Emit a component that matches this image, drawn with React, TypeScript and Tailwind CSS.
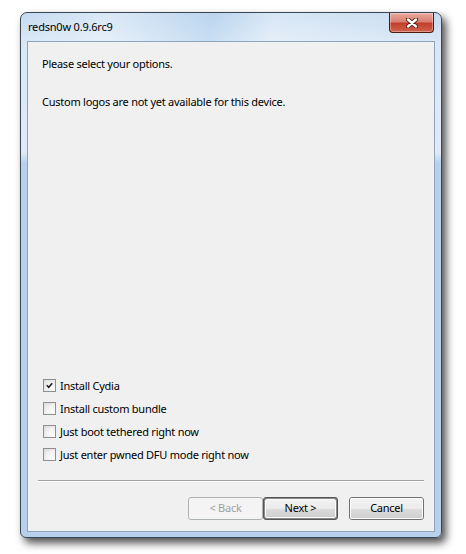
import { ReactNode } from "react";

function CheckBox({ checked, label }: { checked?: boolean; label: string }) {
  return (
    <div className="flex items-center h-[23px]">
      <div className="w-[13px] h-[13px] border border-[#8e8f8f] bg-[linear-gradient(135deg,#dcdcdc,#fdfdfd)] p-[2px]">
        <div className="w-full h-full bg-[linear-gradient(135deg,#e9e9e9,#ffffff)] flex items-center justify-center">
          {checked && (
            <svg width="9" height="9" viewBox="0 0 9 9">
              <path d="M1 4.2 L3.5 6.8 L8 1.5" stroke="#1a1a1a" strokeWidth="1.9" fill="none" />
            </svg>
          )}
        </div>
      </div>
      <span className="ml-[4px] text-[11px] tracking-[-0.25px] text-black leading-none">{label}</span>
    </div>
  );
}

function Btn({ children, disabled, def }: { children: ReactNode; disabled?: boolean; def?: boolean }) {
  if (disabled) {
    return (
      <div className="w-[75px] h-[23px] rounded-[3px] border border-[#adb2b5] bg-[#f4f4f4] flex items-center justify-center text-[11px] tracking-[-0.25px] text-[#a0a0a0]">
        {children}
      </div>
    );
  }
  return (
    <div
      className={
        def
          ? "w-[75px] h-[23px] rounded-[3px] border border-[#555555] p-[1px] bg-[#8a8a8a]"
          : "w-[75px] h-[23px] rounded-[3px] border border-[#707070] bg-[#f4f4f4]"
      }
    >
      <div className="w-full h-full rounded-[2px] border border-[#fcfcfc] bg-[linear-gradient(to_bottom,#f2f2f2_0%,#ebebeb_50%,#dddddd_50%,#cfcfcf_100%)] flex items-center justify-center text-[11px] tracking-[-0.25px] text-black">
        {children}
      </div>
    </div>
  );
}

export default function App() {
  return (
    <div className="w-[466px] h-[554px] bg-white pl-[20px] pt-[12px] font-['Noto_Sans',sans-serif]">
      <div className="w-[422px] h-[526px] rounded-t-[7px] rounded-b-[6px] border border-[#3a4755] shadow-[4px_5px_9px_rgba(0,0,0,0.7)] bg-[linear-gradient(to_bottom,#c6dbf1_0px,#d9e7f5_28px,#dfeaf6_140px,#b7d0ec_150px,#b7d0ec_100%)] flex flex-col px-[6px] pb-[5px]">
        <div className="h-[28px] flex items-start justify-between bg-[linear-gradient(100deg,rgba(255,255,255,0)_0%,rgba(255,255,255,0.35)_20%,rgba(160,200,235,0.3)_45%,rgba(255,255,255,0.3)_60%,rgba(255,255,255,0)_100%)]">
          <span className="mt-[6px] ml-[1px] text-[11px] tracking-[-0.2px] text-black">redsn0w 0.9.6rc9</span>
          <div className="w-[45px] h-[20px] mr-[1px] rounded-b-[4px] border border-[#4d1a12] border-t-0 bg-[linear-gradient(to_bottom,#e9a99c_0%,#d98171_45%,#c2402b_55%,#d0624c_100%)] flex items-center justify-center shadow-[inset_0_0_0_1px_rgba(255,255,255,0.35)]">
            <svg width="12" height="10" viewBox="0 0 12 10">
              <path d="M2 1.5 L10 8.5 M10 1.5 L2 8.5" stroke="#4a1a12" strokeWidth="4.2" strokeLinecap="round" />
              <path d="M2 1.5 L10 8.5 M10 1.5 L2 8.5" stroke="#ffffff" strokeWidth="2.4" strokeLinecap="round" />
            </svg>
          </div>
        </div>
        <div className="flex-1 border border-[#8fa3bb] bg-[#f0f0f0] flex flex-col">
          <div className="pl-[14px] pt-[14px] text-[11px] tracking-[-0.25px] text-black leading-[16px]">
            <p>Please select your options.</p>
            <p className="mt-[22px]">Custom logos are not yet available for this device.</p>
          </div>
          <div className="flex-1" />
          <div className="pl-[15px] flex flex-col">
            <CheckBox checked label="Install Cydia" />
            <CheckBox label="Install custom bundle" />
            <CheckBox label="Just boot tethered right now" />
            <CheckBox label="Just enter pwned DFU mode right now" />
          </div>
          <div className="mx-[10px] mt-[14px] h-[2px] border-t border-[#a0a0a0] border-b border-b-white" />
          <div className="flex justify-end pr-[10px] mt-[15px] mb-[11px]">
            <Btn disabled>&lt; Back</Btn>
            <Btn def>Next &gt;</Btn>
            <div className="w-[11px]" />
            <Btn>Cancel</Btn>
          </div>
        </div>
      </div>
    </div>
  );
}
